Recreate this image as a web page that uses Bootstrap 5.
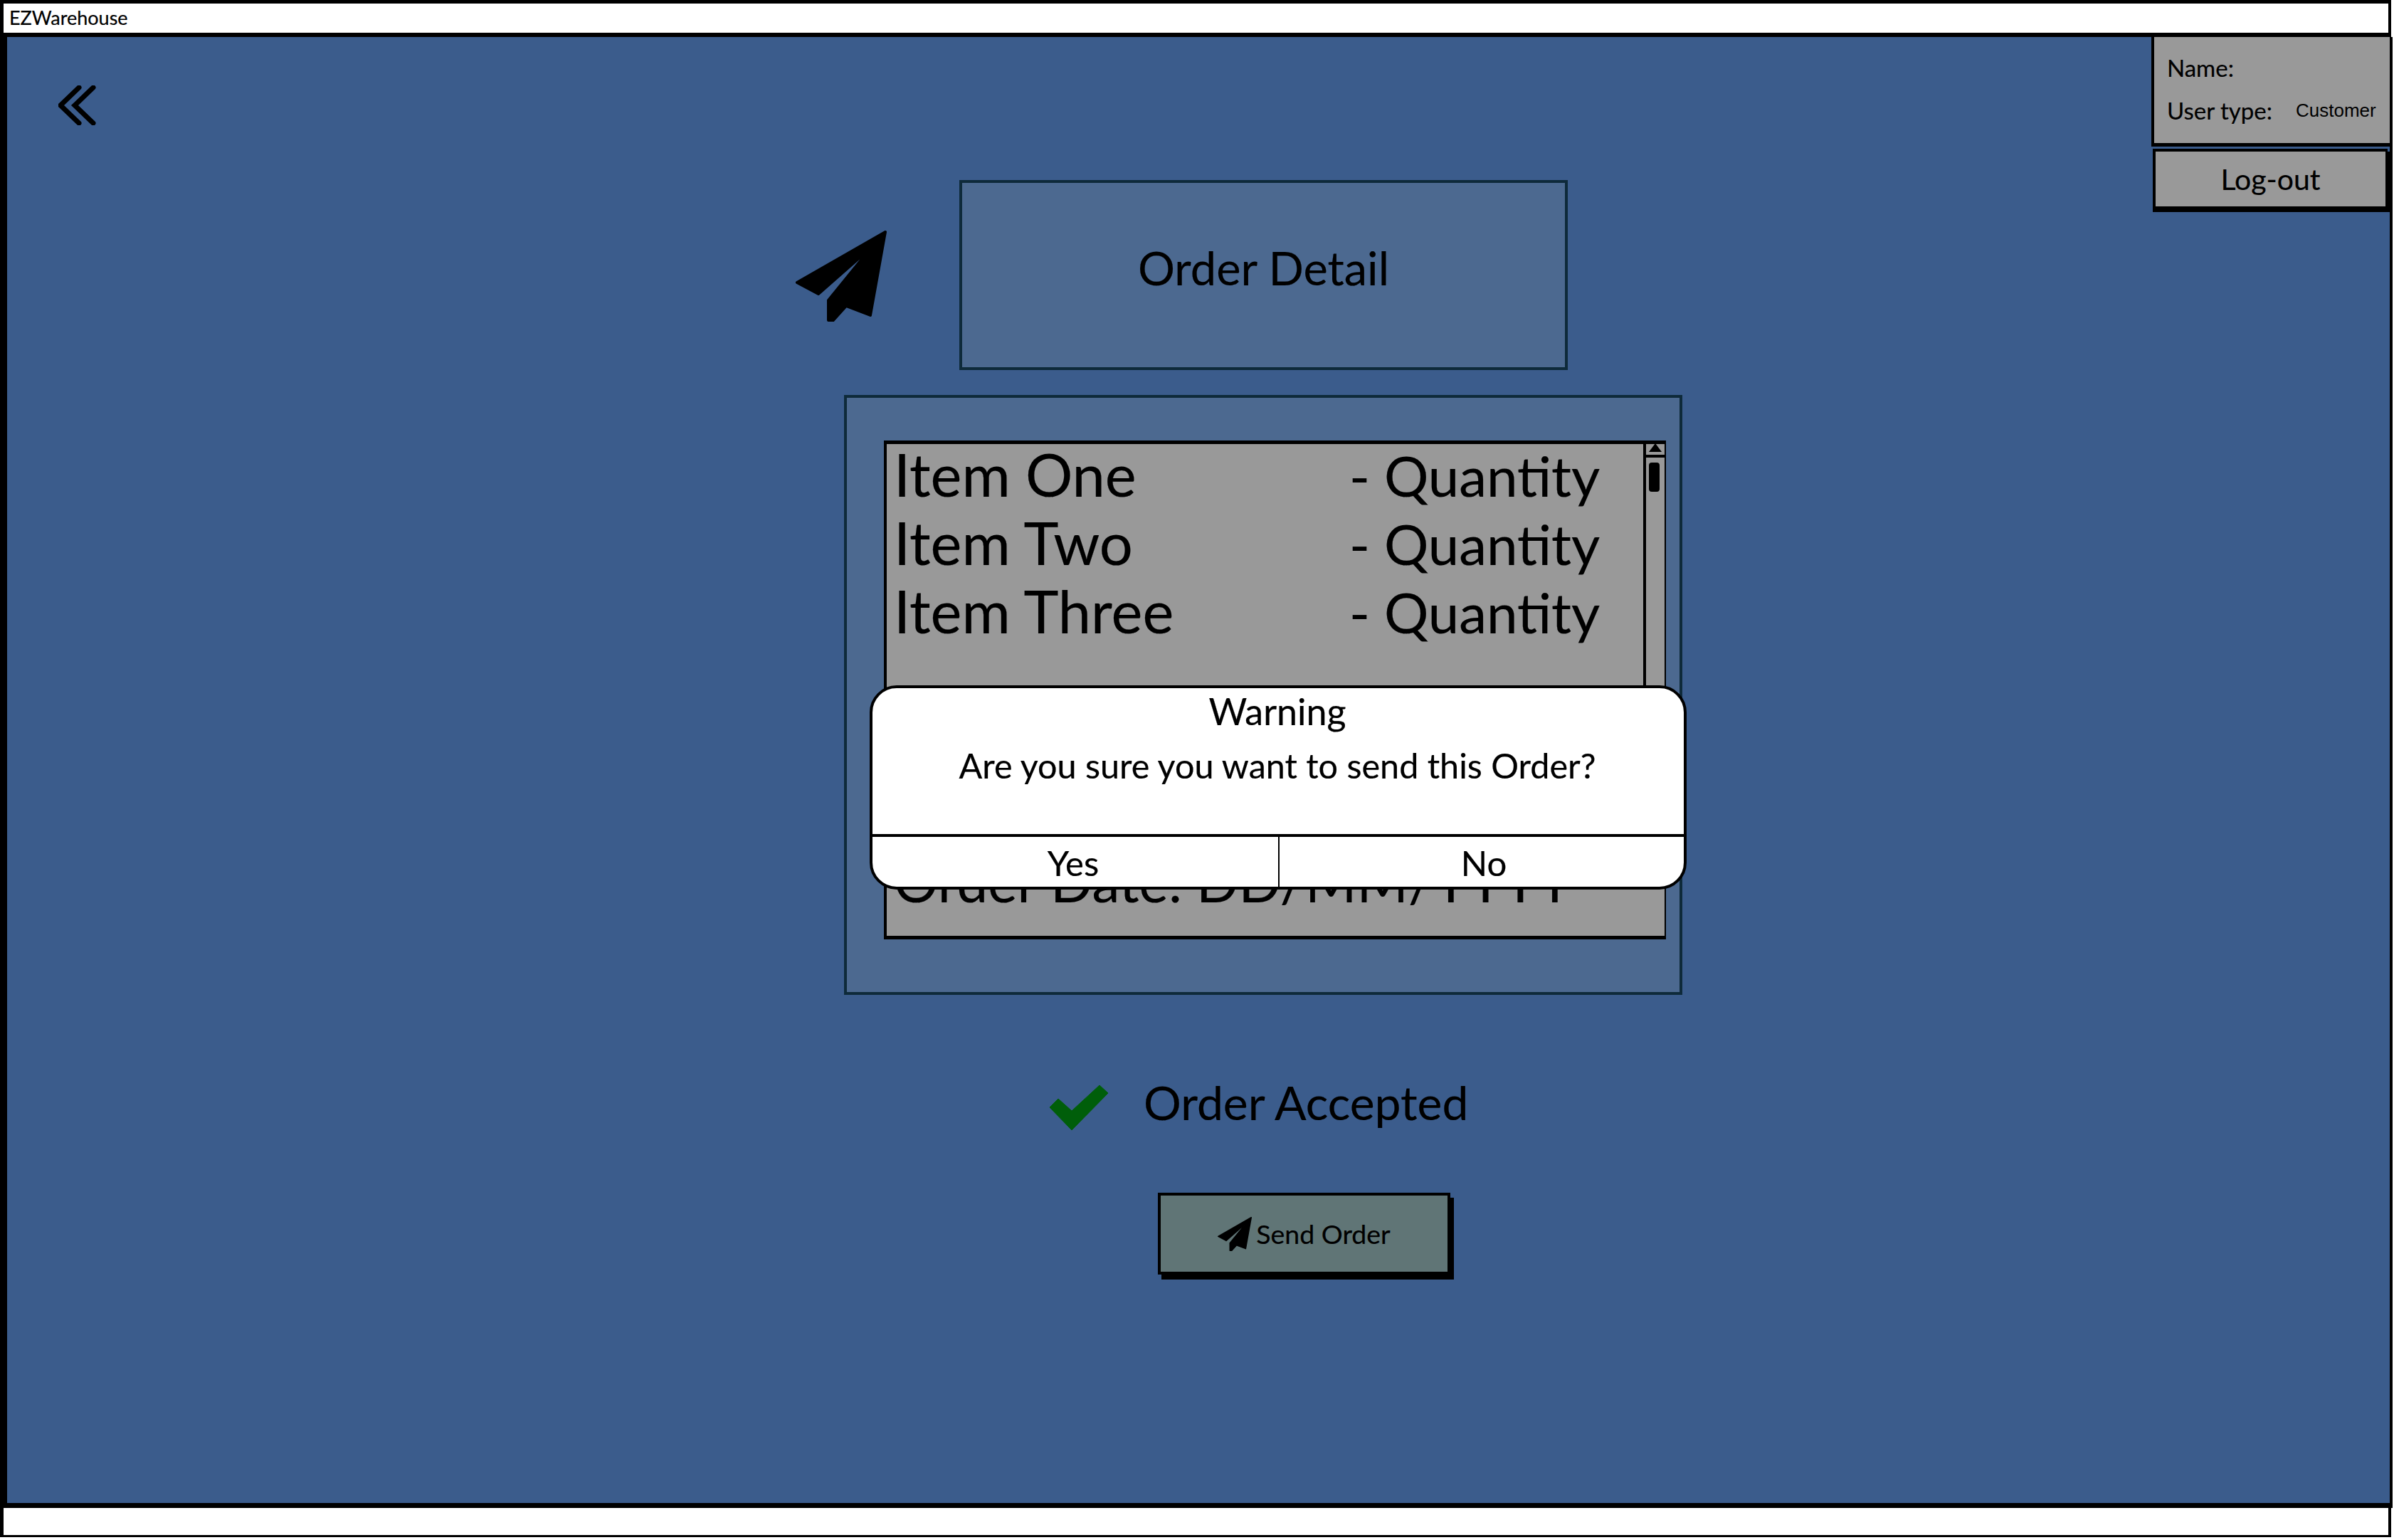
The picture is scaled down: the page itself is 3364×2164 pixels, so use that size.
<!DOCTYPE html>
<html lang="en">
<head>
<meta charset="utf-8">
<title>EZWarehouse</title>
<link href="https://cdn.jsdelivr.net/npm/bootstrap@5.3.0/dist/css/bootstrap.min.css" rel="stylesheet">
<style>
html,body{height:2164px;overflow:hidden}
body{background:#fff;color:#000;font-family:Lato,"Noto Sans",sans-serif;-webkit-text-stroke:.012em #000}
.ez-top{height:52px;margin-right:4px;border:solid #000;border-width:5px 4px 6px 5px;font-size:27px;line-height:39px;padding-left:8px}
.ez-main{height:2067px;margin-right:2px;background:#3b5c8c;border:solid #000;border-width:0 4px 7px 10px}
.ez-foot{height:41px;margin-right:4px;border:solid #000;border-width:0 4px 3px 5px}
.ez-left{width:1100px;padding:68px 0 0 72px}
.ez-center{width:1254px}
.ez-right{min-width:0}
.ez-plane{fill:#000;stroke:#000;stroke-width:4;stroke-linejoin:round}
.ez-head{margin-top:201px;padding-left:8px}
.ez-plane-big{margin-top:71px;margin-right:102px;width:128px;height:128px}
.ez-title{width:855px;height:267px;background:#4c6990;border:4px solid #0e2a3a;font-size:65px;padding-bottom:21px}
.ez-panel{width:1178px;height:843px;margin:35px 0 0 76px;padding:60px 0 0 52px;background:#4c6990;border:4px solid #0e2a3a}
.ez-list{width:1099px;height:701px;background:#999;border:solid #000;border-width:5px 2px 5px 4px;padding:0 0 0 10px;font-size:78px;line-height:84px}
.ez-line{height:84px;margin-bottom:12px}
.ez-name{width:640px;font-size:83px}
.ez-date{margin-top:296px}
.ez-scroll{top:-5px;right:0;width:30px;height:485px;border-left:4px solid #000}
.ez-arrow{height:24px;border-bottom:4px solid #000;border-top:0}
.ez-thumb{width:15px;height:41px;margin:7px 0 0 4px;background:#000;border-radius:4px}
.ez-dialog{top:404px;left:32px;width:1148px;height:287px;background:#fff;border:4px solid #000;border-radius:38px;overflow:hidden;color:#000}
.ez-dialog .card-body{height:205px;padding:0;text-align:center}
.ez-warn{font-size:52px;line-height:58px;margin:3px 0 0 -2px}
.ez-msg{font-size:48.5px;line-height:58px;margin:18px 0 0 -2px}
.ez-choice{border-top:4px solid #000;height:74px}
.ez-choice .btn{flex:1 1 50%;border:0;border-radius:0;background:transparent;color:#000;font-size:49px;line-height:54px;padding:2px 6px 0 0}
.ez-choice .btn+.btn{border-left:2px solid #000;padding:2px 0 0 6px}
.ez-accept{margin:126px 0 0 364px;height:64px;font-size:66px;line-height:50px}
.ez-check{width:84px;height:65px;margin-right:49px;fill:#005e0a;stroke:#005e0a;stroke-width:1;stroke-linejoin:round}
.ez-send{width:411px;height:115px;margin:88px 0 0 517px;background:#607576;border:4px solid #000;border-radius:0;box-shadow:5px 7px 0 #000;color:#000;font-size:37.5px;line-height:44px;padding:0}
.ez-send svg{width:48px;height:48px;margin-right:6px}
.ez-user{width:335px}
.ez-info{height:154px;background:#999;border:solid #000;border-width:0 0 5px 4px;font-size:33px;padding:13px 0 0 18px}
.ez-info-row{height:60px;line-height:36px}
.ez-type{font-family:"Liberation Sans",Arial,sans-serif;font-size:26px;margin-left:33px;-webkit-text-stroke:0}
.ez-logout{width:330px;height:85px;margin:3px 0 0 2px;background:#999;border:solid #000;border-width:4px 3px 4px 4px;border-radius:0;box-shadow:0 4px 0 #000,6px 4px 0 #000;color:#000;font-size:41px;line-height:44px;padding:0}
</style>
</head>
<body class="m-0">
<svg width="0" height="0" class="position-absolute">
  <symbol id="plane" viewBox="0 0 128 128"><path d="M126 2 2 73 32 89 107 23 46 98V126L52 127 71 106 105 119Z"/></symbol>
</svg>
<header class="ez-top">EZWarehouse</header>
<main class="ez-main d-flex">
  <div class="ez-left flex-shrink-0">
    <svg width="56" height="56" viewBox="0 0 56 56" fill="none" stroke="#000" stroke-width="7" stroke-linecap="round" stroke-linejoin="miter"><path d="M29 3 3 28 29 53M49 3 23 28 49 53"/></svg>
  </div>
  <div class="ez-center flex-shrink-0">
    <div class="ez-head d-flex align-items-start">
      <svg class="ez-plane ez-plane-big flex-shrink-0"><use href="#plane"/></svg>
      <h1 class="ez-title d-flex align-items-center justify-content-center m-0 fw-normal">Order Detail</h1>
    </div>
    <section class="ez-panel position-relative">
      <div class="ez-list position-relative">
        <div class="ez-line d-flex align-items-baseline"><span class="ez-name">Item One</span><span>- Quantity</span></div>
        <div class="ez-line d-flex align-items-baseline"><span class="ez-name">Item Two</span><span>- Quantity</span></div>
        <div class="ez-line d-flex align-items-baseline"><span class="ez-name">Item Three</span><span>- Quantity</span></div>
        <div class="ez-date">Order Date: DD/MM/YYYY</div>
        <div class="ez-scroll position-absolute">
          <div class="ez-arrow d-flex justify-content-center"><svg width="22" height="20" viewBox="0 0 22 20"><path d="M11 4 20 16H2Z"/></svg></div>
          <div class="ez-thumb"></div>
        </div>
      </div>
      <div class="ez-dialog card position-absolute">
        <div class="card-body">
          <div class="ez-warn">Warning</div>
          <div class="ez-msg">Are you sure you want to send this Order?</div>
        </div>
        <div class="ez-choice d-flex">
          <button type="button" class="btn">Yes</button>
          <button type="button" class="btn">No</button>
        </div>
      </div>
    </section>
    <div class="ez-accept d-flex align-items-start">
      <svg class="ez-check flex-shrink-0" viewBox="0 0 84 65"><path d="M1 32 13 20 32 37 71 1 83 12 32 64Z"/></svg>
      <span>Order Accepted</span>
    </div>
    <button type="button" class="ez-send btn d-flex align-items-center justify-content-center">
      <svg class="ez-plane"><use href="#plane"/></svg>Send Order
    </button>
  </div>
  <div class="ez-right flex-grow-1 d-flex justify-content-end">
    <aside class="ez-user">
      <div class="ez-info">
        <div class="ez-info-row d-flex align-items-center">Name:</div>
        <div class="ez-info-row d-flex align-items-center"><span>User type:</span><span class="ez-type">Customer</span></div>
      </div>
      <button type="button" class="ez-logout btn">Log-out</button>
    </aside>
  </div>
</main>
<footer class="ez-foot"></footer>
<script src="https://cdn.jsdelivr.net/npm/bootstrap@5.3.0/dist/js/bootstrap.bundle.min.js"></script>
</body>
</html>
